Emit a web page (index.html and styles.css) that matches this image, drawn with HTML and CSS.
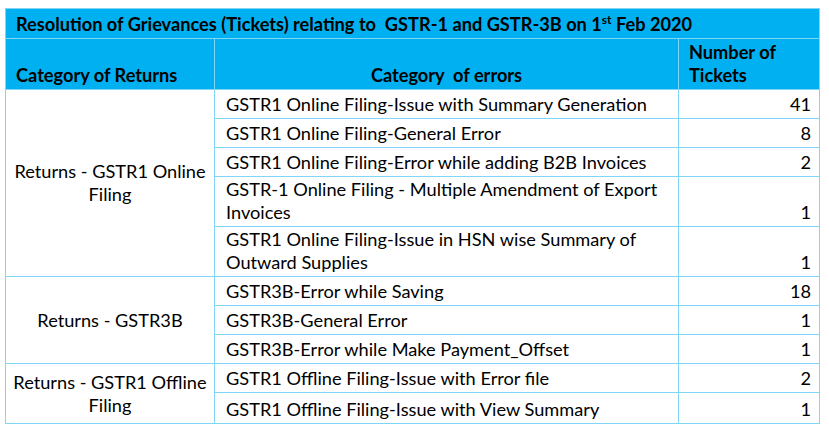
FILE: index.html
```html
<!DOCTYPE html>
<html>
<head>
<meta charset="utf-8">
<link rel="stylesheet" href="styles.css">
</head>
<body>
<table class="grid">
  <colgroup>
    <col class="c1"><col class="c2"><col class="c3">
  </colgroup>
  <tr class="title-row">
    <th colspan="3" class="title">Resolution of Grievances (Tickets) relating to &nbsp;GSTR-1 and GSTR-3B on 1<sup>st</sup> Feb 2020</th>
  </tr>
  <tr class="head-row">
    <th class="h-left">Category of Returns</th>
    <th class="h-center">Category &nbsp;of errors</th>
    <th class="h-left">Number of Tickets</th>
  </tr>
  <tr class="r1">
    <td rowspan="5" class="cat">Returns - GSTR1 Online Filing</td>
    <td class="err">GSTR1 Online Filing-Issue with Summary Generation</td>
    <td class="num">41</td>
  </tr>
  <tr class="r1">
    <td class="err">GSTR1 Online Filing-General Error</td>
    <td class="num">8</td>
  </tr>
  <tr class="r1">
    <td class="err">GSTR1 Online Filing-Error while adding B2B Invoices</td>
    <td class="num">2</td>
  </tr>
  <tr class="r2">
    <td class="err">GSTR-1 Online Filing - Multiple Amendment of Export Invoices</td>
    <td class="num">1</td>
  </tr>
  <tr class="r2">
    <td class="err">GSTR1 Online Filing-Issue in HSN wise Summary of Outward Supplies</td>
    <td class="num">1</td>
  </tr>
  <tr class="r1">
    <td rowspan="3" class="cat">Returns - GSTR3B</td>
    <td class="err">GSTR3B-Error while Saving</td>
    <td class="num">18</td>
  </tr>
  <tr class="r1">
    <td class="err">GSTR3B-General Error</td>
    <td class="num">1</td>
  </tr>
  <tr class="r1">
    <td class="err">GSTR3B-Error while Make Payment_Offset</td>
    <td class="num">1</td>
  </tr>
  <tr class="r1">
    <td rowspan="2" class="cat">Returns - GSTR1 Offline Filing</td>
    <td class="err">GSTR1 Offline Filing-Issue with Error file</td>
    <td class="num">2</td>
  </tr>
  <tr class="r1 last">
    <td class="err">GSTR1 Offline Filing-Issue with View Summary</td>
    <td class="num">1</td>
  </tr>
</table>
</body>
</html>
```

FILE: styles.css
```css
html, body {
  margin: 0;
  background: #ffffff;
}
body {
  padding: 8px 0 0 5px;
  font-family: Lato, "Open Sans", sans-serif;
  font-size: 18.2px;
  color: #000;
}
.grid {
  border-collapse: collapse;
  table-layout: fixed;
  width: 814px;
}
.c1 { width: 209px; }
.c2 { width: 464px; }
.c3 { width: 141px; }
.grid th, .grid td {
  border: 1px solid #80d6f6;
  padding: 0;
  line-height: 23px;
}
.grid th {
  background: #00b0f0;
  font-weight: bold;
  vertical-align: bottom;
}
.title-row th { height: 27px; }
.title {
  text-align: left;
  padding: 0 0 2px 10px !important;
}
.title sup {
  font-size: 12px;
  line-height: 0;
  vertical-align: 7px;
}
.head-row th { height: 48px; padding-bottom: 2px; }
.h-left { text-align: left; padding-left: 10px !important; }
.h-center { text-align: center; }
.r1 td { height: 26px; }
.r2 td { height: 47px; }
.r1.last td { height: 28px; }
.grid td { vertical-align: bottom; padding-bottom: 2px; }
.err { padding-left: 11px !important; padding-right: 8px !important; }
.num { text-align: right; padding-right: 8px !important; }
.grid td.cat {
  text-align: center;
  vertical-align: middle;
  padding: 0 2px;
}
```
